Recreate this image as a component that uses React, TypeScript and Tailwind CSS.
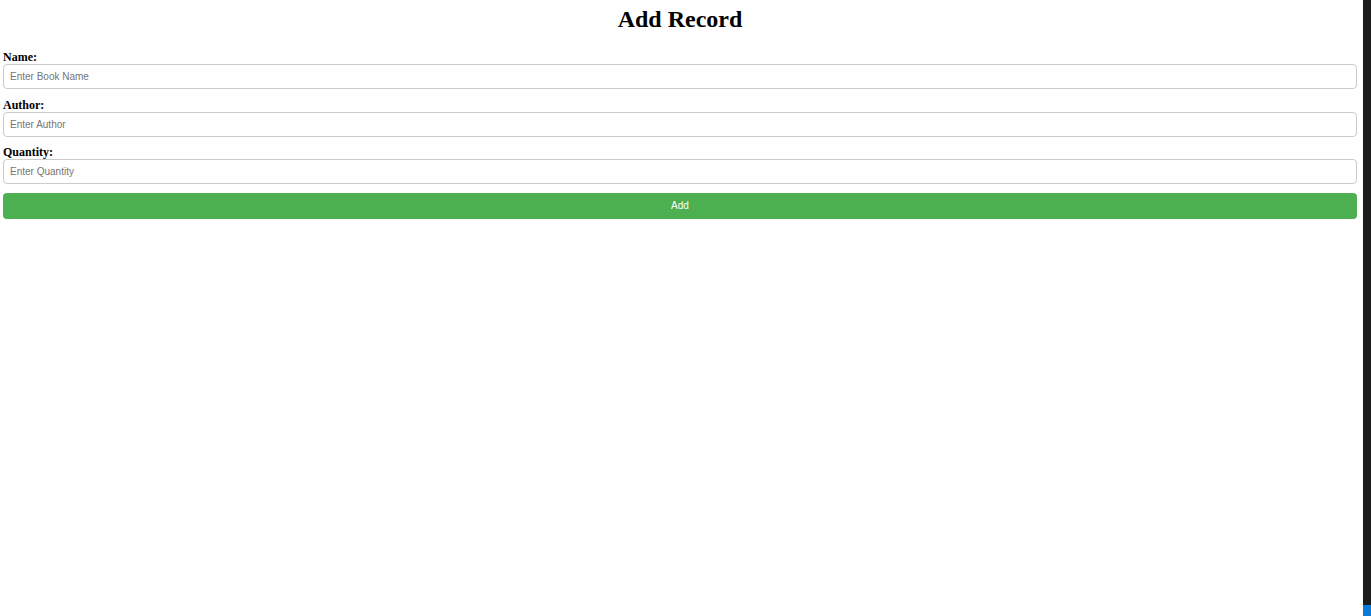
import { useState } from 'react';

const App = () => {
  const [name, setName] = useState('');
  const [author, setAuthor] = useState('');
  const [quantity, setQuantity] = useState('');

  const fields = [
    { label: 'Name:', placeholder: 'Enter Book Name', value: name, set: setName },
    { label: 'Author:', placeholder: 'Enter Author', value: author, set: setAuthor },
    { label: 'Quantity:', placeholder: 'Enter Quantity', value: quantity, set: setQuantity },
  ];

  return (
    <div className="relative min-h-[616px] w-full bg-white font-['Liberation_Serif',serif] text-black">
      <div className="w-[1363px] pl-[3px] pr-[6px]">
        <h2 className="pt-[5px] text-center text-[24px] font-bold leading-[28px]">Add Record</h2>
        <form className="mt-[17px] flex flex-col" onSubmit={(e) => e.preventDefault()}>
          {fields.map((f) => (
            <div key={f.label} className="mb-[8.5px] flex flex-col last:mb-[7.5px]">
              <label className="text-[12px] font-bold leading-[14px]">{f.label}</label>
              <input
                value={f.value}
                onChange={(e) => f.set(e.target.value)}
                placeholder={f.placeholder}
                className="h-[25px] w-full rounded-[4px] border border-[#cccccc] px-[6px] font-['Liberation_Sans',sans-serif] text-[10px] text-black outline-none placeholder:text-[#757575]"
              />
            </div>
          ))}
          <button
            type="submit"
            className="h-[26px] w-full rounded-[4px] bg-[#4caf50] font-['Liberation_Sans',sans-serif] text-[10px] text-white"
          >
            Add
          </button>
        </form>
      </div>
      <div className="absolute right-0 top-0 flex h-[616px] w-[8px] flex-col bg-[#1b1b1b]">
        <div className="mt-auto h-[11px] bg-[#0a7ad8]" />
      </div>
    </div>
  );
};

export default App;
